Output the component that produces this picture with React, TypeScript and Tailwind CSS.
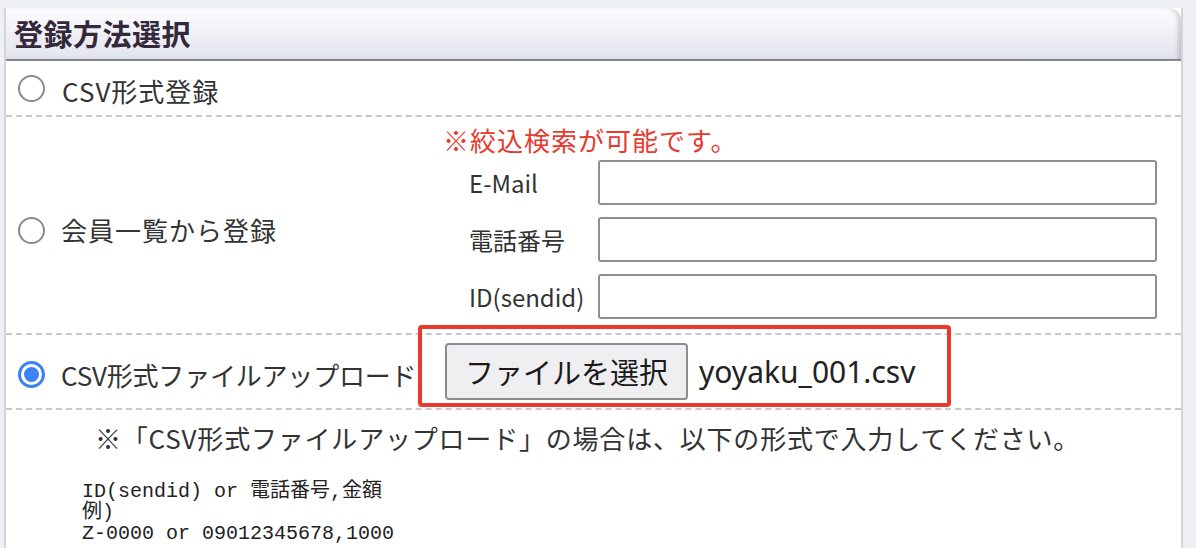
import React from "react";

const jp = { fontFamily: '"Noto Sans CJK JP", "Noto Sans", sans-serif' };

function Radio({ checked = false }: { checked?: boolean }) {
  if (checked) {
    return (
      <span className="flex h-[27px] w-[27px] shrink-0 items-center justify-center rounded-full border-[3px] border-[#3b82f6] bg-white">
        <span className="h-[15px] w-[15px] rounded-full bg-[#3b82f6]" />
      </span>
    );
  }
  return <span className="h-[27px] w-[27px] shrink-0 rounded-full border-2 border-[#8a8a8a] bg-white" />;
}

const fields = ["E-Mail", "電話番号", "ID(sendid)"];

export default function App() {
  return (
    <div className="min-h-[548px] w-[1196px] overflow-hidden bg-[#eff0f5] pt-[8px] pl-[4px]" style={jp}>
      <div className="w-[1179px] border-r-2 border-l-2 border-[#d3d4dc] bg-white">
        {/* header */}
        <div className="flex h-[53px] items-center rounded-tr-[12px] border-b-2 border-[#85878f] bg-gradient-to-b from-[#fdfdff] to-[#e2e4ed] pl-[8px] shadow-[inset_-5px_0_5px_-2px_rgba(0,0,0,0.18)]">
          <span className="text-[29px] font-bold leading-none tracking-[0.5px] text-[#33293a]">登録方法選択</span>
        </div>

        {/* CSV形式登録 */}
        <div className="flex h-[56px] items-center gap-[17px] border-b-2 border-dashed border-[#c9c9c9] pl-[12px]">
          <Radio />
          <span className="pt-[6px] text-[26px] leading-none tracking-[1px] text-[#333]">CSV形式登録</span>
        </div>

        {/* 会員一覧から登録 */}
        <div className="flex h-[218px] border-b-2 border-dashed border-[#c9c9c9]">
          <div className="flex w-[436px] shrink-0 items-center gap-[16px] pt-[10px] pl-[12px]">
            <Radio />
            <span className="text-[26px] leading-none tracking-[1px] text-[#333]">会員一覧から登録</span>
          </div>
          <div className="flex flex-col pt-[8px] pl-[1px]">
            <div className="h-[30px] text-[26px] leading-[30px] tracking-[1px] text-[#e53a2f]">※絞込検索が可能です。</div>
            <div className="mt-[5px] flex flex-col gap-[12px] pl-[26px]">
              {fields.map((f) => (
                <div key={f} className="flex items-center">
                  <span className="w-[129px] text-[24px] leading-none text-[#333]">{f}</span>
                  <div className="h-[45px] w-[559px] rounded-[3px] border-2 border-[#8f8f8f] bg-white" />
                </div>
              ))}
            </div>
          </div>
        </div>

        {/* CSV形式ファイルアップロード */}
        <div className="relative flex h-[75px] items-center border-b-2 border-dashed border-[#c9c9c9]">
          <div className="flex w-[439px] shrink-0 items-center gap-[16px] pt-[6px] pl-[12px]">
            <Radio checked />
            <span className="text-[26px] leading-none tracking-[-0.2px] text-[#333]">CSV形式ファイルアップロード</span>
          </div>
          <div className="flex items-center gap-[11px]">
            <button className="flex h-[57px] items-center rounded-[4px] border-2 border-[#8c8c8c] bg-[#efeff2] px-[18px] text-[29px] leading-none text-[#1a1a1a]">
              ファイルを選択
            </button>
            <span className="text-[30px] leading-none text-[#222]" style={{ fontFamily: '"Noto Sans", sans-serif' }}>
              yoyaku_001.csv
            </span>
          </div>
          {/* red annotation box */}
          <div className="pointer-events-none absolute top-[-10px] left-[412px] h-[82px] w-[533px] rounded-[4px] border-[4px] border-[#e8392c]" />
        </div>

        {/* note */}
        <div className="h-[140px] pt-[12px]">
          <div className="pl-[89px] text-[26px] leading-[32px] tracking-[0.8px] text-[#333]">
            ※「CSV形式ファイルアップロード」の場合は、以下の形式で入力してください。
          </div>
          <pre
            className="mt-[27px] pl-[76px] text-[20px] leading-[21px] text-[#222]"
            style={{ fontFamily: '"Liberation Mono", "Noto Sans CJK JP", monospace' }}
          >
            {"ID(sendid) or 電話番号,金額\n例)\nZ-0000 or 09012345678,1000"}
          </pre>
        </div>
      </div>
    </div>
  );
}
